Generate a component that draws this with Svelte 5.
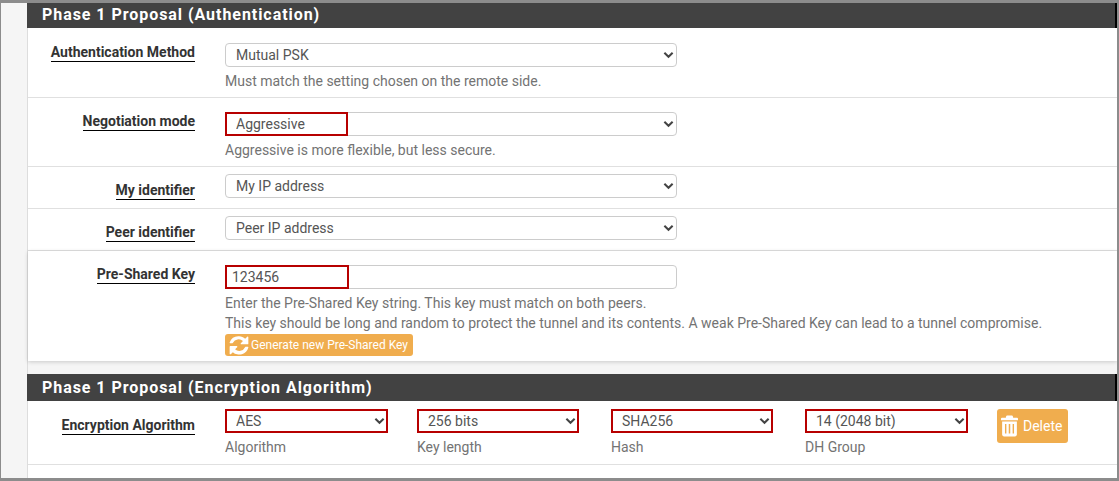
<script>
  const algos = [
    { value: 'AES', caption: 'Algorithm', width: 163, gap: 29 },
    { value: '256 bits', caption: 'Key length', width: 162, gap: 32 },
    { value: 'SHA256', caption: 'Hash', width: 162, gap: 32 },
    { value: '14 (2048 bit)', caption: 'DH Group', width: 163, gap: 29 }
  ];
</script>

{#snippet chevron()}
  <svg class="chev" viewBox="0 0 12 8" width="11" height="8" aria-hidden="true">
    <path d="M1.5 1.5 6 6l4.5-4.5" fill="none" stroke="#444" stroke-width="2.2" />
  </svg>
{/snippet}

{#snippet pick(value, mark)}
  <div class="pick">
    <select><option>{value}</option></select>
    {@render chevron()}
    {#if mark}<span class="mark"></span>{/if}
  </div>
{/snippet}

<div class="frame">
  <div class="panel">
    <h2 class="head first">Phase 1 Proposal (Authentication)</h2>

    <section class="row r1">
      <div class="lab"><span>Authentication Method</span></div>
      <div class="ctl">
        {@render pick('Mutual PSK', false)}
        <p class="help">Must match the setting chosen on the remote side.</p>
      </div>
    </section>

    <section class="row r2">
      <div class="lab"><span>Negotiation mode</span></div>
      <div class="ctl">
        {@render pick('Aggressive', true)}
        <p class="help">Aggressive is more flexible, but less secure.</p>
      </div>
    </section>

    <section class="row r3">
      <div class="lab low"><span>My identifier</span></div>
      <div class="ctl">{@render pick('My IP address', false)}</div>
    </section>

    <section class="row r3">
      <div class="lab low"><span>Peer identifier</span></div>
      <div class="ctl">{@render pick('Peer IP address', false)}</div>
    </section>

    <section class="row r5">
      <div class="lab"><span>Pre-Shared Key</span></div>
      <div class="ctl wide">
        <div class="pick">
          <input value="123456" />
          <span class="mark keymark"></span>
        </div>
        <p class="help">Enter the Pre-Shared Key string. This key must match on both peers.</p>
        <p class="help">This key should be long and random to protect the tunnel and its contents. A weak Pre-Shared Key can lead to a tunnel compromise.</p>
        <button class="btn gen">
          <svg viewBox="0 0 24 24" width="22" height="22" aria-hidden="true">
            <path fill="#fff" d="M12 2.5c2.6 0 5 1 6.7 2.7l2.3-2.2c.5-.5 1.2-.1 1.2.5v7c0 .4-.3.7-.7.7h-7c-.6 0-1-.7-.5-1.2l2.3-2.3A6.9 6.9 0 0 0 5.400 9.500c-.1.3-.3.5-.6.5H2.300c-.4 0-.6-.3-.5-.7A10.300 10.300 0 0 1 12 2.500ZM2.500 13.200h7c.6 0 1 .7.5 1.200l-2.300 2.300a6.900 6.900 0 0 0 10.900-2.200c.1-.3.300-.5.600-.5h2.500c.4 0 .6.300.5.700A10.300 10.300 0 0 1 5.300 19.800L3 22c-.5.500-1.200.100-1.200-.5v-7.600c0-.4.300-.7.700-.7Z" />
          </svg>
          Generate new Pre-Shared Key
        </button>
      </div>
    </section>

    <div class="gap"></div>

    <h2 class="head second">Phase 1 Proposal (Encryption Algorithm)</h2>

    <section class="row r6">
      <div class="lab enc"><span>Encryption Algorithm</span></div>
      <div class="algos">
        {#each algos as a}
          <div class="algo" style="width:{a.width}px;margin-right:{a.gap}px">
            <div class="pick strong">
              <select><option>{a.value}</option></select>
              {@render chevron()}
            </div>
            <p class="help">{a.caption}</p>
          </div>
        {/each}
        <button class="btn del">
          <svg viewBox="0 0 18 22" width="17" height="22" aria-hidden="true">
            <path fill="#fff" d="M6.500 0h5c.6 0 1 .4 1.100 1l.3 1.300H17c.6 0 1 .4 1 1V5H0V3.300c0-.6.400-1 1-1h4.100L5.400 1c.1-.6.500-1 1.100-1ZM1.200 6.200h15.600V20c0 1.100-.9 2-2 2H3.200c-1.100 0-2-.9-2-2V6.200Zm3 2.800v10h1.500V9H4.200Zm4 0v10h1.600V9H8.200Zm4.100 0v10h1.500V9h-1.500Z" />
          </svg>
          Delete
        </button>
      </div>
    </section>
    <div class="rest"></div>
  </div>
</div>

<style>
  :global(body) {
    margin: 0;
    background: #f5f5f5;
  }
  .frame {
    box-sizing: border-box;
    width: 1119px;
    height: 481px;
    overflow: hidden;
    background: #f5f5f5;
    border-style: solid;
    border-color: #8c8c8c;
    border-width: 3px 2px 3px 1px;
    padding-left: 26px;
    font-family: Roboto, "Liberation Sans", sans-serif;
    font-size: 14px;
    color: #555;
  }
  .panel {
    width: 1090px;
    border-left: 1px solid #ddd;
    box-sizing: border-box;
  }
  .head {
    margin: 0 0 0 -1px;
    background: #424242;
    color: #fff;
    font-size: 16px;
    font-weight: 700;
    letter-spacing: 0.95px;
    padding-left: 15px;
    border-right: 2px solid #000;
  }
  .head.first {
    height: 25px;
    line-height: 24px;
  }
  .head.second {
    height: 27px;
    line-height: 27px;
  }
  .row {
    display: flex;
    box-sizing: border-box;
    background: #fff;
    border-bottom: 1px solid #e0e0e0;
    align-items: flex-start;
  }
  .r1 { height: 70px; padding-top: 15px; }
  .r2 { height: 69px; padding-top: 14px; }
  .r3 { height: 42px; padding-top: 7px; }
  .r5 { height: 110px; padding-top: 14px; border-bottom: 0; box-shadow: 0 1px 4px rgba(0,0,0,.18); position: relative; }
  .r6 { height: 64px; padding-top: 8px; }
  .lab {
    width: 167px;
    text-align: right;
    flex: none;
    font-weight: 700;
    color: #333;
    line-height: 17px;
    margin-top: 1px;
    margin-right: 30px;
  }
  .lab.low {
    margin-top: 8px;
  }
  .lab.enc {
    margin-top: 8px;
  }
  .lab span {
    display: inline-block;
    border-bottom: 1px solid #000;
  }
  .ctl {
    width: 452px;
  }
  .ctl.wide {
    width: 840px;
  }
  .ctl.wide .pick {
    width: 452px;
  }
  .pick {
    position: relative;
    height: 24px;
  }
  select, input {
    display: block;
    box-sizing: border-box;
    width: 100%;
    height: 24px;
    margin: 0;
    appearance: none;
    background: #fff;
    border: 1px solid #ccc;
    border-radius: 4px;
    color: #555;
    font: 14px Roboto, "Liberation Sans", sans-serif;
    padding: 0 10px;
    outline: none;
  }
  input {
    padding: 0 6px;
  }
  .chev {
    position: absolute;
    right: 3px;
    top: 8px;
    pointer-events: none;
  }
  .mark {
    position: absolute;
    left: 0;
    top: 0;
    width: 123px;
    height: 24px;
    box-sizing: border-box;
    border: 2px solid #b70000;
    pointer-events: none;
  }
  .keymark {
    width: 124px;
  }
  .strong select {
    border: 2px solid #b70000;
    border-radius: 0;
    padding: 0 9px;
  }
  .help {
    margin: 0;
    color: #737373;
    line-height: 20px;
  }
  .r1 .help, .r2 .help {
    margin-top: 4px;
  }
  .r5 .help:first-of-type {
    margin-top: 4px;
  }
  .algos {
    display: flex;
    align-items: flex-start;
  }
  .algo .help {
    margin-top: 4px;
  }
  .btn {
    display: flex;
    align-items: center;
    background: #f0ad4e;
    border: 0;
    border-radius: 3px;
    color: #fff;
    font-family: Roboto, "Liberation Sans", sans-serif;
    padding: 0;
  }
  .gen {
    width: 188px;
    height: 22px;
    font-size: 12px;
    padding-left: 3px;
    gap: 1px;
    margin-top: 1px;
    white-space: nowrap;
  }
  .del {
    width: 71px;
    height: 34px;
    margin-top: 0;
    font-size: 14px;
    padding-left: 4px;
    gap: 5px;
  }
  .gap {
    height: 13px;
  }
  .rest {
    height: 20px;
    background: #fff;
  }
</style>
